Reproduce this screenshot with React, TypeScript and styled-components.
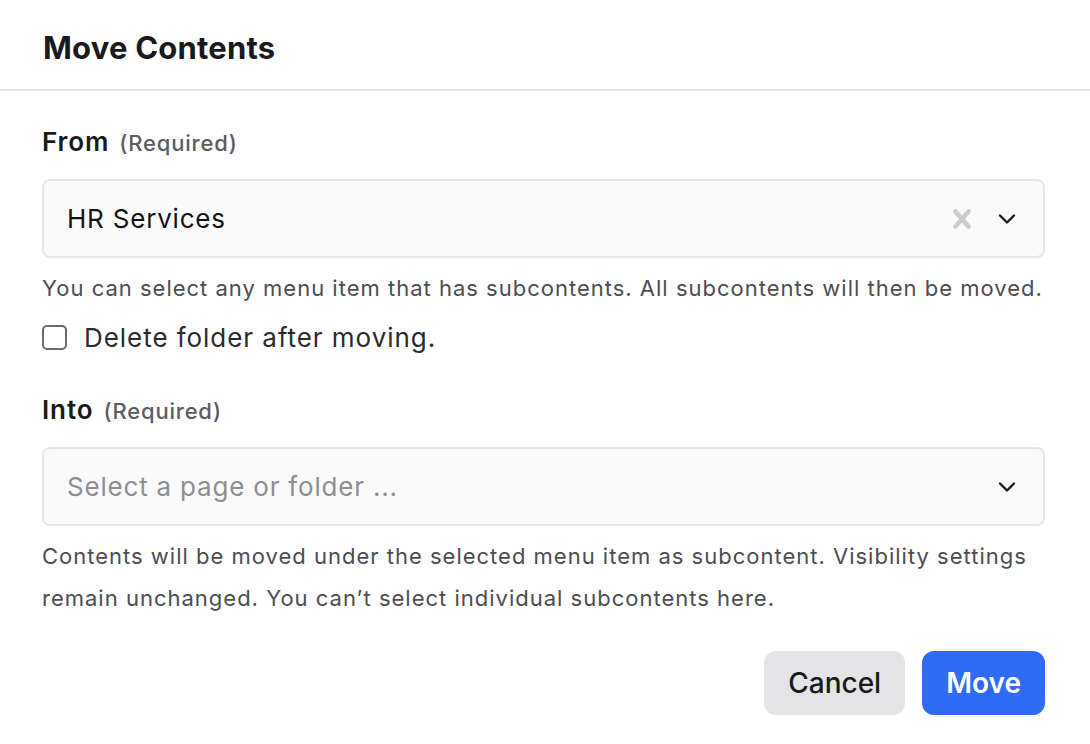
import React, { useState } from "react";
import styled, { createGlobalStyle } from "styled-components";

const GlobalStyle = createGlobalStyle`
  html, body {
    margin: 0;
    padding: 0;
    background: #ffffff;
  }

  body {
    font-family: Inter, "Noto Sans", "Liberation Sans", sans-serif;
    color: #1b1b1d;
    -webkit-font-smoothing: antialiased;
  }

  * {
    box-sizing: border-box;
  }
`;

const Dialog = styled.div`
  width: 1090px;
  height: 744px;
  background: #ffffff;
  display: flex;
  flex-direction: column;
`;

const Header = styled.header`
  height: 91px;
  padding: 27px 43px 0;
  border-bottom: 2px solid #e4e4e6;
`;

const Title = styled.h1`
  margin: 0;
  font-size: 31px;
  line-height: 42px;
  font-weight: 700;
  color: #1a1a1c;
  letter-spacing: 0.2px;
`;

const Body = styled.div`
  padding: 35px 45px 0 42px;
  display: flex;
  flex-direction: column;
`;

const Label = styled.div<{ $spaced?: boolean }>`
  display: flex;
  align-items: baseline;
  gap: 10px;
  margin-top: ${(p) => (p.$spaced ? "41px" : "0")};
  margin-bottom: 20px;
  line-height: 32px;
`;

const LabelText = styled.span`
  font-size: 26px;
  font-weight: 600;
  letter-spacing: 0.9px;
  color: #1a1a1c;
`;

const Required = styled.span`
  font-size: 22px;
  font-weight: 500;
  letter-spacing: 0.8px;
  color: #5c5c62;
`;

const Select = styled.div`
  height: 79px;
  display: flex;
  align-items: center;
  padding: 0 27px 0 23px;
  background: #fafafa;
  border: 2px solid #e6e6e8;
  border-radius: 8px;
`;

const Value = styled.span<{ $placeholder?: boolean }>`
  flex: 1;
  font-size: 26px;
  letter-spacing: 0.8px;
  color: ${(p) => (p.$placeholder ? "#8e8e92" : "#141416")};
`;

const Indicators = styled.div`
  display: flex;
  align-items: center;
  gap: 17px;
`;

const Help = styled.p`
  margin: 9px 0 0;
  font-size: 22px;
  line-height: 42px;
  letter-spacing: 1px;
  color: #4d4d52;
`;

const CheckRow = styled.label`
  display: flex;
  align-items: center;
  gap: 17px;
  margin-top: 12px;
  height: 32px;
  font-size: 26px;
  letter-spacing: 0.95px;
  color: #2b2b2e;
`;

const Box = styled.span`
  width: 25px;
  height: 25px;
  border: 2px solid #6b6b70;
  border-radius: 5px;
  background: #ffffff;
`;

const Footer = styled.div`
  display: flex;
  justify-content: flex-end;
  gap: 17px;
  margin-top: 32px;
  padding-right: 45px;
`;

const Button = styled.button<{ $primary?: boolean }>`
  height: 64px;
  padding: 0 24px;
  border: none;
  border-radius: 12px;
  font-family: inherit;
  font-size: 28px;
  font-weight: ${(p) => (p.$primary ? 600 : 500)};
  color: ${(p) => (p.$primary ? "#ffffff" : "#1a1a1c")};
  background: ${(p) => (p.$primary ? "#2e6cf6" : "#e4e4e7")};
`;

const ClearIcon = () => (
  <svg width="38" height="38" viewBox="0 0 20 20" fill="#cccccc">
    <path d="M14.348 14.849c-0.469 0.469-1.229 0.469-1.697 0l-2.651-3.030-2.651 3.029c-0.469 0.469-1.229 0.469-1.697 0-0.469-0.469-0.469-1.229 0-1.697l2.758-3.15-2.759-3.152c-0.469-0.469-0.469-1.228 0-1.697s1.228-0.469 1.697 0l2.652 3.031 2.651-3.031c0.469-0.469 1.228-0.469 1.697 0s0.469 1.229 0 1.697l-2.758 3.152 2.758 3.15c0.469 0.469 0.469 1.229 0 1.698z" />
  </svg>
);

const Chevron = () => (
  <svg width="18" height="12" viewBox="0 0 18 12" fill="none">
    <polyline
      points="2,2.5 9,9.5 16,2.5"
      stroke="#1c1c1e"
      strokeWidth="2.4"
      strokeLinecap="round"
      strokeLinejoin="round"
    />
  </svg>
);

export default function App() {
  const [from] = useState("HR Services");

  return (
    <>
      <GlobalStyle />
      <Dialog>
        <Header>
          <Title>Move Contents</Title>
        </Header>
        <Body>
          <Label>
            <LabelText>From</LabelText>
            <Required>(Required)</Required>
          </Label>
          <Select>
            <Value>{from}</Value>
            <Indicators>
              <ClearIcon />
              <Chevron />
            </Indicators>
          </Select>
          <Help>
            You can select any menu item that has subcontents. All subcontents
            will then be moved.
          </Help>
          <CheckRow>
            <Box />
            Delete folder after moving.
          </CheckRow>

          <Label $spaced>
            <LabelText>Into</LabelText>
            <Required>(Required)</Required>
          </Label>
          <Select>
            <Value $placeholder>Select a page or folder ...</Value>
            <Indicators>
              <Chevron />
            </Indicators>
          </Select>
          <Help>
            Contents will be moved under the selected menu item as subcontent.
            Visibility settings remain unchanged. You can’t select individual
            subcontents here.
          </Help>
        </Body>
        <Footer>
          <Button>Cancel</Button>
          <Button $primary>Move</Button>
        </Footer>
      </Dialog>
    </>
  );
}
